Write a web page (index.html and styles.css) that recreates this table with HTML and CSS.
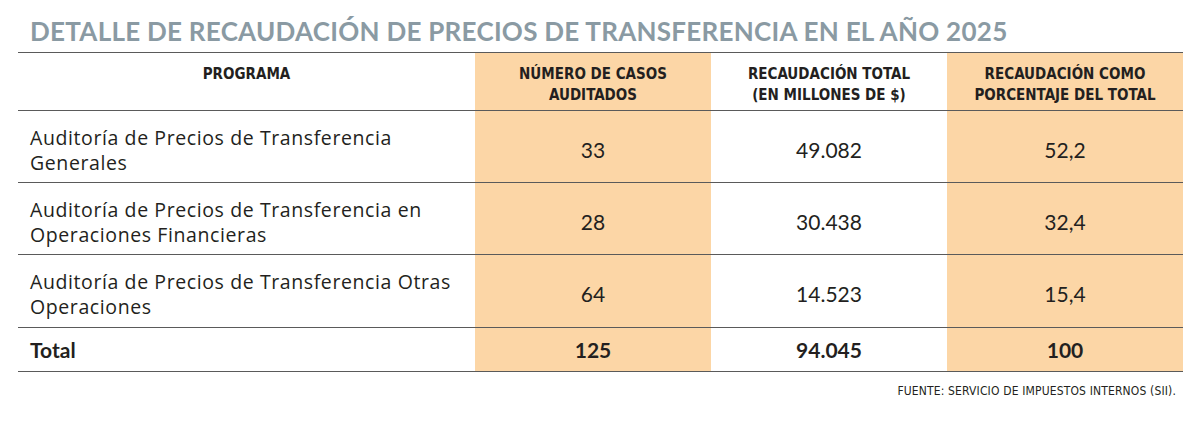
FILE: index.html
```html
<!DOCTYPE html>
<html lang="es">
<head>
<meta charset="utf-8">
<title>Detalle de recaudación</title>
<link rel="stylesheet" href="styles.css">
</head>
<body>
<h1 class="title">DETALLE DE RECAUDACIÓN DE PRECIOS DE TRANSFERENCIA EN EL AÑO 2025</h1>
<div class="table">
  <div class="row head">
    <div class="cell hcell">PROGRAMA</div>
    <div class="cell hcell peach">NÚMERO DE CASOS<br>AUDITADOS</div>
    <div class="cell hcell">RECAUDACIÓN TOTAL<br>(EN MILLONES DE $)</div>
    <div class="cell hcell peach">RECAUDACIÓN COMO<br>PORCENTAJE DEL TOTAL</div>
  </div>
  <div class="row body">
    <div class="cell name">Auditoría de Precios de Transferencia<br>Generales</div>
    <div class="cell num peach">33</div>
    <div class="cell num">49.082</div>
    <div class="cell num peach">52,2</div>
  </div>
  <div class="row body">
    <div class="cell name">Auditoría de Precios de Transferencia en<br>Operaciones Financieras</div>
    <div class="cell num peach">28</div>
    <div class="cell num">30.438</div>
    <div class="cell num peach">32,4</div>
  </div>
  <div class="row body last">
    <div class="cell name">Auditoría de Precios de Transferencia Otras<br>Operaciones</div>
    <div class="cell num peach">64</div>
    <div class="cell num">14.523</div>
    <div class="cell num peach">15,4</div>
  </div>
  <div class="row total">
    <div class="cell tname">Total</div>
    <div class="cell tnum peach">125</div>
    <div class="cell tnum">94.045</div>
    <div class="cell tnum peach">100</div>
  </div>
</div>
<p class="source">FUENTE: SERVICIO DE IMPUESTOS INTERNOS (SII).</p>
</body>
</html>
```
FILE: styles.css
```css
* { box-sizing: border-box; }
html, body { margin: 0; padding: 0; background: #ffffff; }
body {
  width: 1200px;
  height: 422px;
  font-family: Lato, "Noto Sans", sans-serif;
  color: #231f20;
  overflow: hidden;
}
.title {
  margin: 0;
  height: 52px;
  padding: 18px 0 0 30px;
  font-family: Lato, "Noto Sans", sans-serif;
  font-weight: 700;
  font-size: 26px;
  line-height: 26px;
  letter-spacing: 0.27px;
  color: #8a9aa3;
  white-space: nowrap;
}
.table {
  margin-left: 18px;
  width: 1165px;
  border-top: 1px solid #5a5a5a;
}
.row {
  display: grid;
  grid-template-columns: 457px 236px 236px 236px;
  border-bottom: 1px solid #5a5a5a;
}
.peach { background: #fcd6a6; }
.head { height: 58px; }
.body { height: 72px; }
.body.last { height: 73px; }
.total { height: 44px; }
.hcell {
  text-align: center;
  padding-top: 11px;
  font-family: "Liberation Sans Narrow", "DejaVu Sans Condensed", Roboto, sans-serif;
  font-weight: 700;
  font-size: 15px;
  line-height: 21px;
  color: #231f20;
}
.name {
  padding: 14px 0 0 12px;
  font-family: "Open Sans", Lato, sans-serif;
  font-size: 19.5px;
  line-height: 25px;
  letter-spacing: 0.6px;
  white-space: nowrap;
}
.num {
  text-align: center;
  padding-top: 26px;
  font-size: 21px;
  line-height: 25px;
}
.tname {
  padding: 10px 0 0 12px;
  font-weight: 700;
  font-size: 21px;
  line-height: 24px;
}
.tnum {
  text-align: center;
  padding-top: 10px;
  font-weight: 700;
  font-size: 21px;
  line-height: 24px;
}
.source {
  margin: 12px 0 0;
  padding-right: 24px;
  text-align: right;
  font-family: "Liberation Sans Narrow", "DejaVu Sans Condensed", Roboto, sans-serif;
  font-size: 12px;
  line-height: 14px;
  letter-spacing: 0.15px;
  color: #231f20;
}
```
